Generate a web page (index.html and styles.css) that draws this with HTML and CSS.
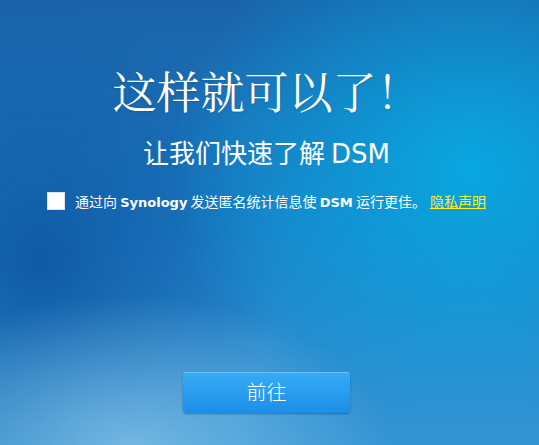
FILE: index.html
```html
<!DOCTYPE html>
<html lang="zh-CN">
<head>
    <meta charset="UTF-8">
    <meta name="viewport" content="width=device-width, initial-scale=1.0">
    <title>Synology DSM</title>
    <link rel="stylesheet" href="styles.css">
</head>
<body>

<div class="welcome">
    <h1 class="title">这样就可以了！</h1>
    <h2 class="subtitle">让我们快速了解 <span class="latin">DSM</span></h2>

    <div class="agree-row">
        <span class="check-box"></span>
        <span class="agree-text">通过向 <b>Synology</b> 发送匿名统计信息使 <b>DSM</b> 运行更佳。</span>
        <a class="privacy-link" href="#">隐私声明</a>
    </div>

    <button class="next-btn">前往</button>
</div>

</body>
</html>
```

FILE: styles.css
```css
html, body {
    margin: 0;
    padding: 0;
    height: 100%;
}
body {
    font-family: "Noto Sans CJK SC", sans-serif;
    color: #fff;
    overflow: hidden;
    background:
        radial-gradient(ellipse 260px 150px at 130px 445px, rgba(125, 190, 230, 0.85), rgba(125, 190, 230, 0)),
        radial-gradient(ellipse 300px 260px at 470px 170px, rgba(8, 170, 226, 0.95), rgba(8, 170, 226, 0)),
        radial-gradient(ellipse 240px 260px at 40px 260px, rgba(14, 84, 160, 0.85), rgba(14, 84, 160, 0)),
        linear-gradient(180deg, #1a63a9 0%, #1b7cc3 50%, #3595d4 100%);
}
.welcome {
    display: flex;
    flex-direction: column;
    align-items: center;
    padding: 68px 6px 0 0;
}
.title {
    margin: 0;
    font-family: "Noto Serif CJK SC", "Noto Sans CJK SC", serif;
    font-size: 44px;
    line-height: 44px;
    font-weight: 400;
    text-shadow: 0 1px 2px rgba(0, 0, 0, 0.15);
}
.subtitle {
    margin: 27px 0 0;
    font-size: 26px;
    line-height: 26px;
    font-weight: 400;
}
.subtitle .latin {
    font-family: "DejaVu Sans", sans-serif;
}
.agree-row {
    display: flex;
    align-items: center;
    margin-top: 25px;
    height: 18px;
    font-size: 14px;
}
.check-box {
    width: 18px;
    height: 18px;
    background: #fff;
    box-sizing: border-box;
    border: 1px solid #d8e4ee;
    margin-right: 10px;
}
.agree-text b {
    font-family: "DejaVu Sans", sans-serif;
    font-size: 13px;
    font-weight: 700;
}
.privacy-link {
    color: #ffee22;
    margin-left: 4px;
    font-size: 14px;
}
.next-btn {
    margin-top: 162px;
    width: 167px;
    height: 41px;
    padding: 0 0 3px;
    border: none;
    border-top: 1px solid #6cc6ff;
    border-radius: 3px;
    background: linear-gradient(180deg, #35abf8 0%, #1c8ee6 100%);
    box-shadow: 0 1px 2px rgba(0, 0, 0, 0.3);
    color: #fff;
    font-family: "Noto Sans CJK SC", sans-serif;
    font-size: 20px;
    font-weight: 300;
    cursor: pointer;
}
```
